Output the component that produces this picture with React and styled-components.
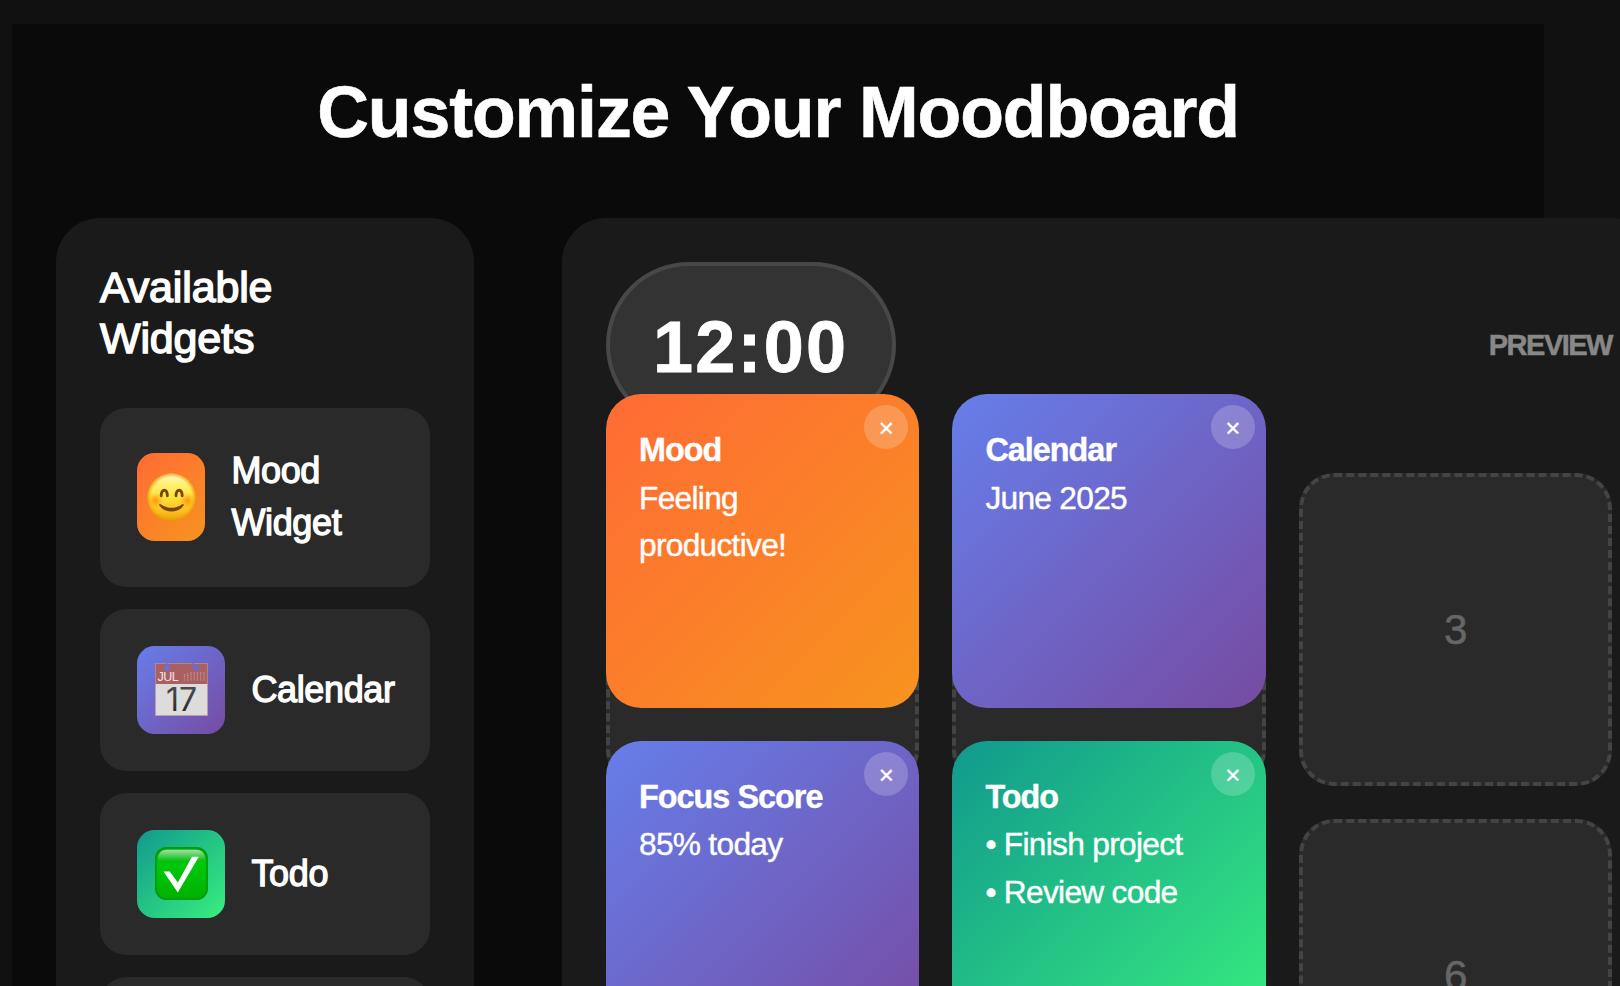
import React from "react";
import styled, { createGlobalStyle } from "styled-components";

const GlobalStyle = createGlobalStyle`
  * { box-sizing: border-box; }
  html, body { margin: 0; background: #111; overflow: hidden; }
  body {
    color: #fff;
    font-family: "Liberation Sans", Helvetica, Arial, sans-serif;
    letter-spacing: -0.704px;
  }
`;

const gradients = {
  sunset: "linear-gradient(135deg, #ff6b35, #f7931e)",
  violet: "linear-gradient(135deg, #667eea, #764ba2)",
  mint: "linear-gradient(135deg, #11998e, #38ef7d)",
};

const Viewport = styled.div`
  height: 100vh;
  overflow: hidden;
  padding: 24px 0 0 12px;
`;

const Container = styled.main`
  width: 1532px;
  height: 1200px;
  padding: 44px;
  background: #0a0a0a;
`;

const PageTitle = styled.h1`
  margin: 0 0 61px;
  font-size: 71.6px;
  line-height: 89px;
  font-weight: 700;
  letter-spacing: -1.1px;
  text-align: center;
  -webkit-text-stroke: 0.6px #fff;
`;

const Layout = styled.div`
  display: grid;
  grid-template-columns: 418px 1094px;
  gap: 88px;
`;

const Panel = styled.section`
  height: 1000px;
  padding: 44px;
  border-radius: 44px;
  background: #1a1a1a;
`;

const PanelTitle = styled.h3`
  margin: 0 0 44px;
  font-size: 43px;
  line-height: 51px;
  font-weight: 400;
  letter-spacing: -0.15px;
  -webkit-text-stroke: 1.5px #fff;
`;

const WidgetList = styled.div`
  display: flex;
  flex-direction: column;
  gap: 22px;
`;

const WidgetItem = styled.div`
  display: flex;
  align-items: center;
  gap: 26.4px;
  min-height: 162px;
  padding: 37px;
  border-radius: 26.4px;
  background: #2a2a2a;
`;

const WidgetIcon = styled.div`
  display: flex;
  flex: none;
  align-items: center;
  justify-content: center;
  width: ${(p) => p.$width || 88}px;
  height: 88px;
  border-radius: 17.6px;
  background: ${(p) => gradients[p.$tone]};
`;

const WidgetName = styled.span`
  font-size: 36px;
  line-height: 52.35px;
  letter-spacing: -0.35px;
  -webkit-text-stroke: 1.3px #fff;
`;

const PreviewHeader = styled.header`
  display: flex;
  align-items: center;
  justify-content: space-between;
  height: 166px;
  margin-bottom: 45px;
`;

const Clock = styled.div`
  height: 166px;
  width: 290px;
  padding: 2px 0 0 43px;
  border: 4px solid #484848;
  border-radius: 88px;
  background: #333;
  font-size: 72px;
  font-weight: 700;
  line-height: 158px;
  letter-spacing: 2.2px;
  -webkit-text-stroke: 0.8px #fff;
`;

const PreviewLabel = styled.span`
  color: #888;
  font-size: 29px;
  font-weight: 700;
  letter-spacing: -1.5px;
  -webkit-text-stroke: 0.5px #888;
`;

const Board = styled.div`
  position: relative;
`;

const SlotGrid = styled.div`
  display: grid;
  grid-template-columns: repeat(3, 1fr);
  grid-auto-rows: 313.4px;
  gap: 33px;
`;

const Slot = styled.div`
  display: flex;
  align-items: center;
  justify-content: center;
  border: 4px dashed #444;
  border-radius: 35.2px;
  background: #2a2a2a;
  color: #666;
  font-size: 42.24px;
  -webkit-text-stroke: 0.5px #666;
`;

const PlacedLayer = styled.div`
  position: absolute;
  top: -79px;
  left: 0;
  display: grid;
  grid-template-columns: repeat(2, 313.4px);
  grid-auto-rows: 313.6px;
  gap: 33px;
`;

const Card = styled.article`
  position: relative;
  padding: 33px;
  border-radius: 35.2px;
  background: ${(p) => gradients[p.$tone]};
  font-size: 31.68px;
  line-height: 47.5px;
  -webkit-text-stroke: 0.4px #fff;
`;

const CardTitle = styled.div`
  font-size: 32.3px;
  font-weight: 700;
  letter-spacing: -0.95px;
`;

const CloseButton = styled.button`
  position: absolute;
  top: 11px;
  right: 11px;
  display: flex;
  align-items: center;
  justify-content: center;
  width: 44px;
  height: 44px;
  padding: 3px 0 0;
  border: 0;
  border-radius: 50%;
  background: rgba(255, 255, 255, 0.2);
  color: #fff;
  font: 400 26px "Liberation Sans", sans-serif;
  -webkit-text-stroke: 0.3px #fff;
`;

function Smiley() {
  return (
    <svg width="49" height="49" viewBox="0 0 49 49">
      <defs>
        <linearGradient id="face" x1="0" y1="0" x2="0" y2="1">
          <stop offset="0" stopColor="#fff9c8" />
          <stop offset=".2" stopColor="#fff27a" />
          <stop offset=".48" stopColor="#ffe43c" />
          <stop offset=".8" stopColor="#fdbc1e" />
          <stop offset="1" stopColor="#e89a0c" />
        </linearGradient>
        <radialGradient id="rim">
          <stop offset=".84" stopColor="#f0a000" stopOpacity="0" />
          <stop offset="1" stopColor="#e88e00" stopOpacity=".75" />
        </radialGradient>
        <radialGradient id="blush">
          <stop offset="0" stopColor="#ff7a00" stopOpacity=".7" />
          <stop offset="1" stopColor="#ff8a00" stopOpacity="0" />
        </radialGradient>
      </defs>
      <circle cx="24.5" cy="24.5" r="23.9" fill="url(#face)" />
      <circle cx="24.5" cy="24.5" r="23.9" fill="url(#rim)" />
      <circle cx="8.5" cy="27.5" r="8" fill="url(#blush)" />
      <circle cx="40.5" cy="27.5" r="8" fill="url(#blush)" />
      <path d="M14.200 22.800c.4-7.400 5.800-7.400 6.200 0" fill="none" stroke="#7a4508" strokeWidth="2.800" strokeLinecap="round" />
      <path d="M29 22.800c.4-7.400 5.800-7.400 6.200 0" fill="none" stroke="#7a4508" strokeWidth="2.800" strokeLinecap="round" />
      <path d="M12.900 31c1.400 0 4.600 3.800 11.600 3.800S34.700 31 36.100 31c.9 0 .8 1 .3 1.700-2.200 3.300-6.400 5.700-11.900 5.700s-9.700-2.400-11.900-5.700c-.5-.7-.6-1.700.3-1.700z" fill="#7a4508" />
    </svg>
  );
}

function CalendarGlyph() {
  const bars = [
    [29.5, 11], [32.7, 10], [36, 9], [39.2, 9], [42.4, 9], [45.6, 9], [49, 9],
  ];
  return (
    <svg width="53" height="53" viewBox="0 0 53 53">
      <defs>
        <linearGradient id="digits" x1="0" y1="0" x2="0" y2="1">
          <stop offset="0" stopColor="#555" />
          <stop offset="1" stopColor="#222" />
        </linearGradient>
      </defs>
      <rect width="53" height="53" fill="#dcdcdc" />
      <rect width="53" height="21" fill="#aa5f60" />
      <rect x=".4" y=".4" width="52.2" height="52.2" fill="none" stroke="#b78d9d" strokeWidth=".8" />
      <path d="M11.8 0v5M37.500 0l2.500 4" stroke="#6b6fd6" strokeWidth="1.600" />
      <circle cx="12" cy="5" r="3" fill="#6b6fd6" />
      <circle cx="41" cy="5" r="3" fill="#6f68cc" />
      {bars.map(([x, y]) => (
        <path key={x} d={`M${x} ${y}V18`} stroke="#cf9b9d" strokeWidth="1.3" strokeDasharray="1.4 .7" opacity=".75" />
      ))}
      <text x="2.500" y="18" fill="#f3e6e6" fontFamily="Liberation Sans" fontSize="12.500" letterSpacing="-.5">JUL</text>
      <text x="26.500" y="47.500" textAnchor="middle" fill="url(#digits)" fontFamily="Inter" fontSize="32" letterSpacing="0">17</text>
    </svg>
  );
}

function CheckGlyph() {
  return (
    <svg width="53" height="53" viewBox="0 0 53 53">
      <defs>
        <linearGradient id="green" x1="0" y1="0" x2="0" y2="1">
          <stop offset="0" stopColor="#0aae14" />
          <stop offset=".35" stopColor="#00c80c" />
          <stop offset="1" stopColor="#00b000" />
        </linearGradient>
        <linearGradient id="gloss" x1="0" y1="0" x2="0" y2="1">
          <stop offset="0" stopColor="#fff" stopOpacity=".62" />
          <stop offset="1" stopColor="#fff" stopOpacity="0" />
        </linearGradient>
      </defs>
      <rect x=".9" y=".9" width="51.2" height="51.2" rx="10.5" fill="url(#green)" stroke="#049a0c" strokeWidth="1.8" />
      <path d="M3 14V12c0-6 4-9.200 9-9.200h29c5 0 9 3.200 9 9.200v2z" fill="url(#gloss)" />
      <path d="M8.500 24.500h6.300L22.800 35.500 37 9.800h6.800L22.800 45.500z" fill="#fff" />
    </svg>
  );
}

const available = [
  { name: "Mood Widget", tone: "sunset", width: 68, glyph: <Smiley /> },
  { name: "Calendar", tone: "violet", glyph: <CalendarGlyph /> },
  { name: "Todo", tone: "mint", glyph: <CheckGlyph /> },
];

const placed = [
  { title: "Mood", tone: "sunset", lines: ["Feeling productive!"] },
  { title: "Calendar", tone: "violet", lines: ["June 2025"] },
  { title: "Focus Score", tone: "violet", lines: ["85% today"] },
  { title: "Todo", tone: "mint", lines: ["• Finish project", "• Review code"] },
];

const slots = ["", "", "3", "", "", "6"];

export default function App() {
  return (
    <Viewport>
      <GlobalStyle />
      <Container>
        <PageTitle>Customize Your Moodboard</PageTitle>
        <Layout>
          <Panel>
            <PanelTitle>Available Widgets</PanelTitle>
            <WidgetList>
              {available.map((w) => (
                <WidgetItem key={w.name}>
                  <WidgetIcon $tone={w.tone} $width={w.width}>{w.glyph}</WidgetIcon>
                  <WidgetName>{w.name}</WidgetName>
                </WidgetItem>
              ))}
              <WidgetItem />
            </WidgetList>
          </Panel>
          <Panel>
            <PreviewHeader>
              <Clock>12:00</Clock>
              <PreviewLabel>PREVIEW</PreviewLabel>
            </PreviewHeader>
            <Board>
              <SlotGrid>
                {slots.map((label, i) => (
                  <Slot key={i}>{label}</Slot>
                ))}
              </SlotGrid>
              <PlacedLayer>
                {placed.map((c) => (
                  <Card key={c.title} $tone={c.tone}>
                    <CardTitle>{c.title}</CardTitle>
                    {c.lines.map((line) => (
                      <div key={line}>{line}</div>
                    ))}
                    <CloseButton aria-label="Remove">×</CloseButton>
                  </Card>
                ))}
              </PlacedLayer>
            </Board>
          </Panel>
        </Layout>
      </Container>
    </Viewport>
  );
}
